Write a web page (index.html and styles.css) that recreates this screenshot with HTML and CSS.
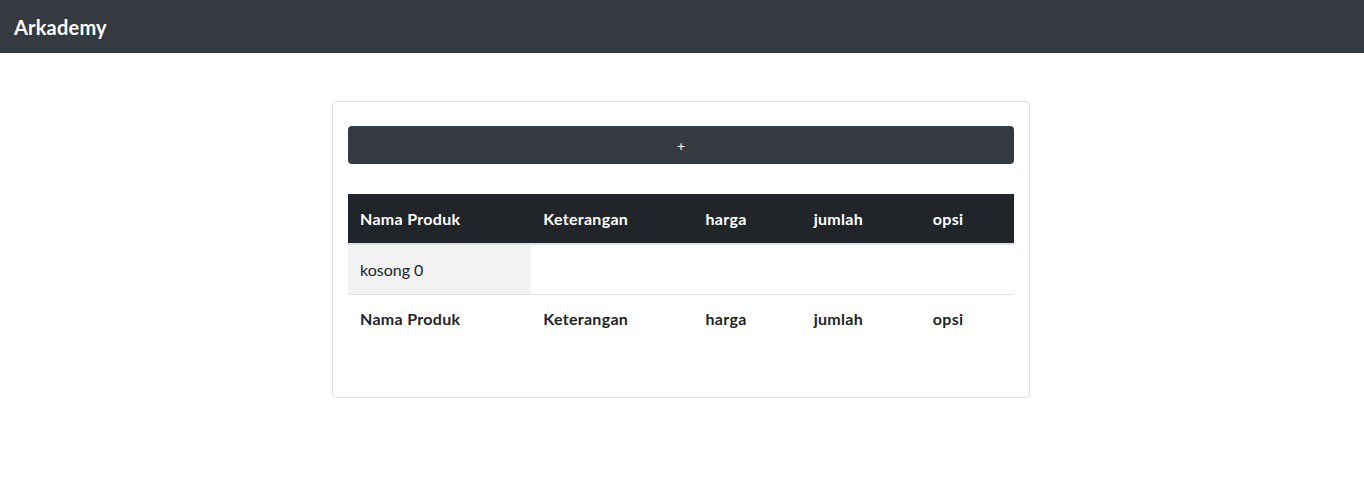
FILE: index.html
```html
<!DOCTYPE html>
<html>
<head>
<meta charset="utf-8">
<link rel="stylesheet" href="styles.css">
</head>
<body>
<nav class="navbar"><span class="brand">Arkademy</span></nav>
<main class="container">
  <div class="card">
    <button class="btn-add">+</button>
    <table class="table">
      <thead>
        <tr><th class="c1">Nama Produk</th><th class="c2">Keterangan</th><th class="c3">harga</th><th class="c4">jumlah</th><th class="c5">opsi</th></tr>
      </thead>
      <tbody>
        <tr class="empty"><td class="muted">kosong 0</td><td></td><td></td><td></td><td></td></tr>
      </tbody>
      <tfoot>
        <tr><th>Nama Produk</th><th>Keterangan</th><th>harga</th><th>jumlah</th><th>opsi</th></tr>
      </tfoot>
    </table>
  </div>
</main>
</body>
</html>
```
FILE: styles.css
```css
* { box-sizing: border-box; }
body {
  margin: 0;
  font-family: Lato, "Noto Sans", sans-serif;
  font-size: 16px;
  color: #212529;
  background: #fff;
}
.navbar {
  height: 53px;
  background: #343a40;
  display: flex;
  align-items: center;
  padding: 0 14px;
}
.brand {
  color: #fff;
  font-size: 20px;
  font-weight: 700;
  letter-spacing: 0.2px;
}
.container {
  width: 698px;
  margin: 48px auto 0;
  position: relative;
  left: -1px;
}
.card {
  border: 1px solid #dfdfdf;
  border-radius: 4px;
  padding: 24px 15px 55px;
}
.btn-add {
  display: block;
  width: 100%;
  height: 38px;
  background: #343a40;
  color: #fff;
  border: none;
  border-radius: 4px;
  font-family: inherit;
  font-size: 14px;
  cursor: pointer;
}
.table {
  width: 100%;
  margin-top: 30px;
  border-collapse: collapse;
}
.table th, .table td {
  text-align: left;
  padding: 0 12px;
  vertical-align: middle;
}
.table th { font-weight: 700; letter-spacing: 0.3px; }
.c1 { width: 183px; }
.c2 { width: 162px; }
.c3 { width: 108px; }
.c4 { width: 119px; }
.c5 { width: 93px; }
thead th {
  height: 50px;
  background: #212529;
  color: #fff;
  border-bottom: 2px solid #dee2e6;
}
tbody td {
  height: 50px;
  border-bottom: 1px solid #dee2e6;
}
.muted { background: #f2f2f2; }
tfoot th { height: 48px; }
```
